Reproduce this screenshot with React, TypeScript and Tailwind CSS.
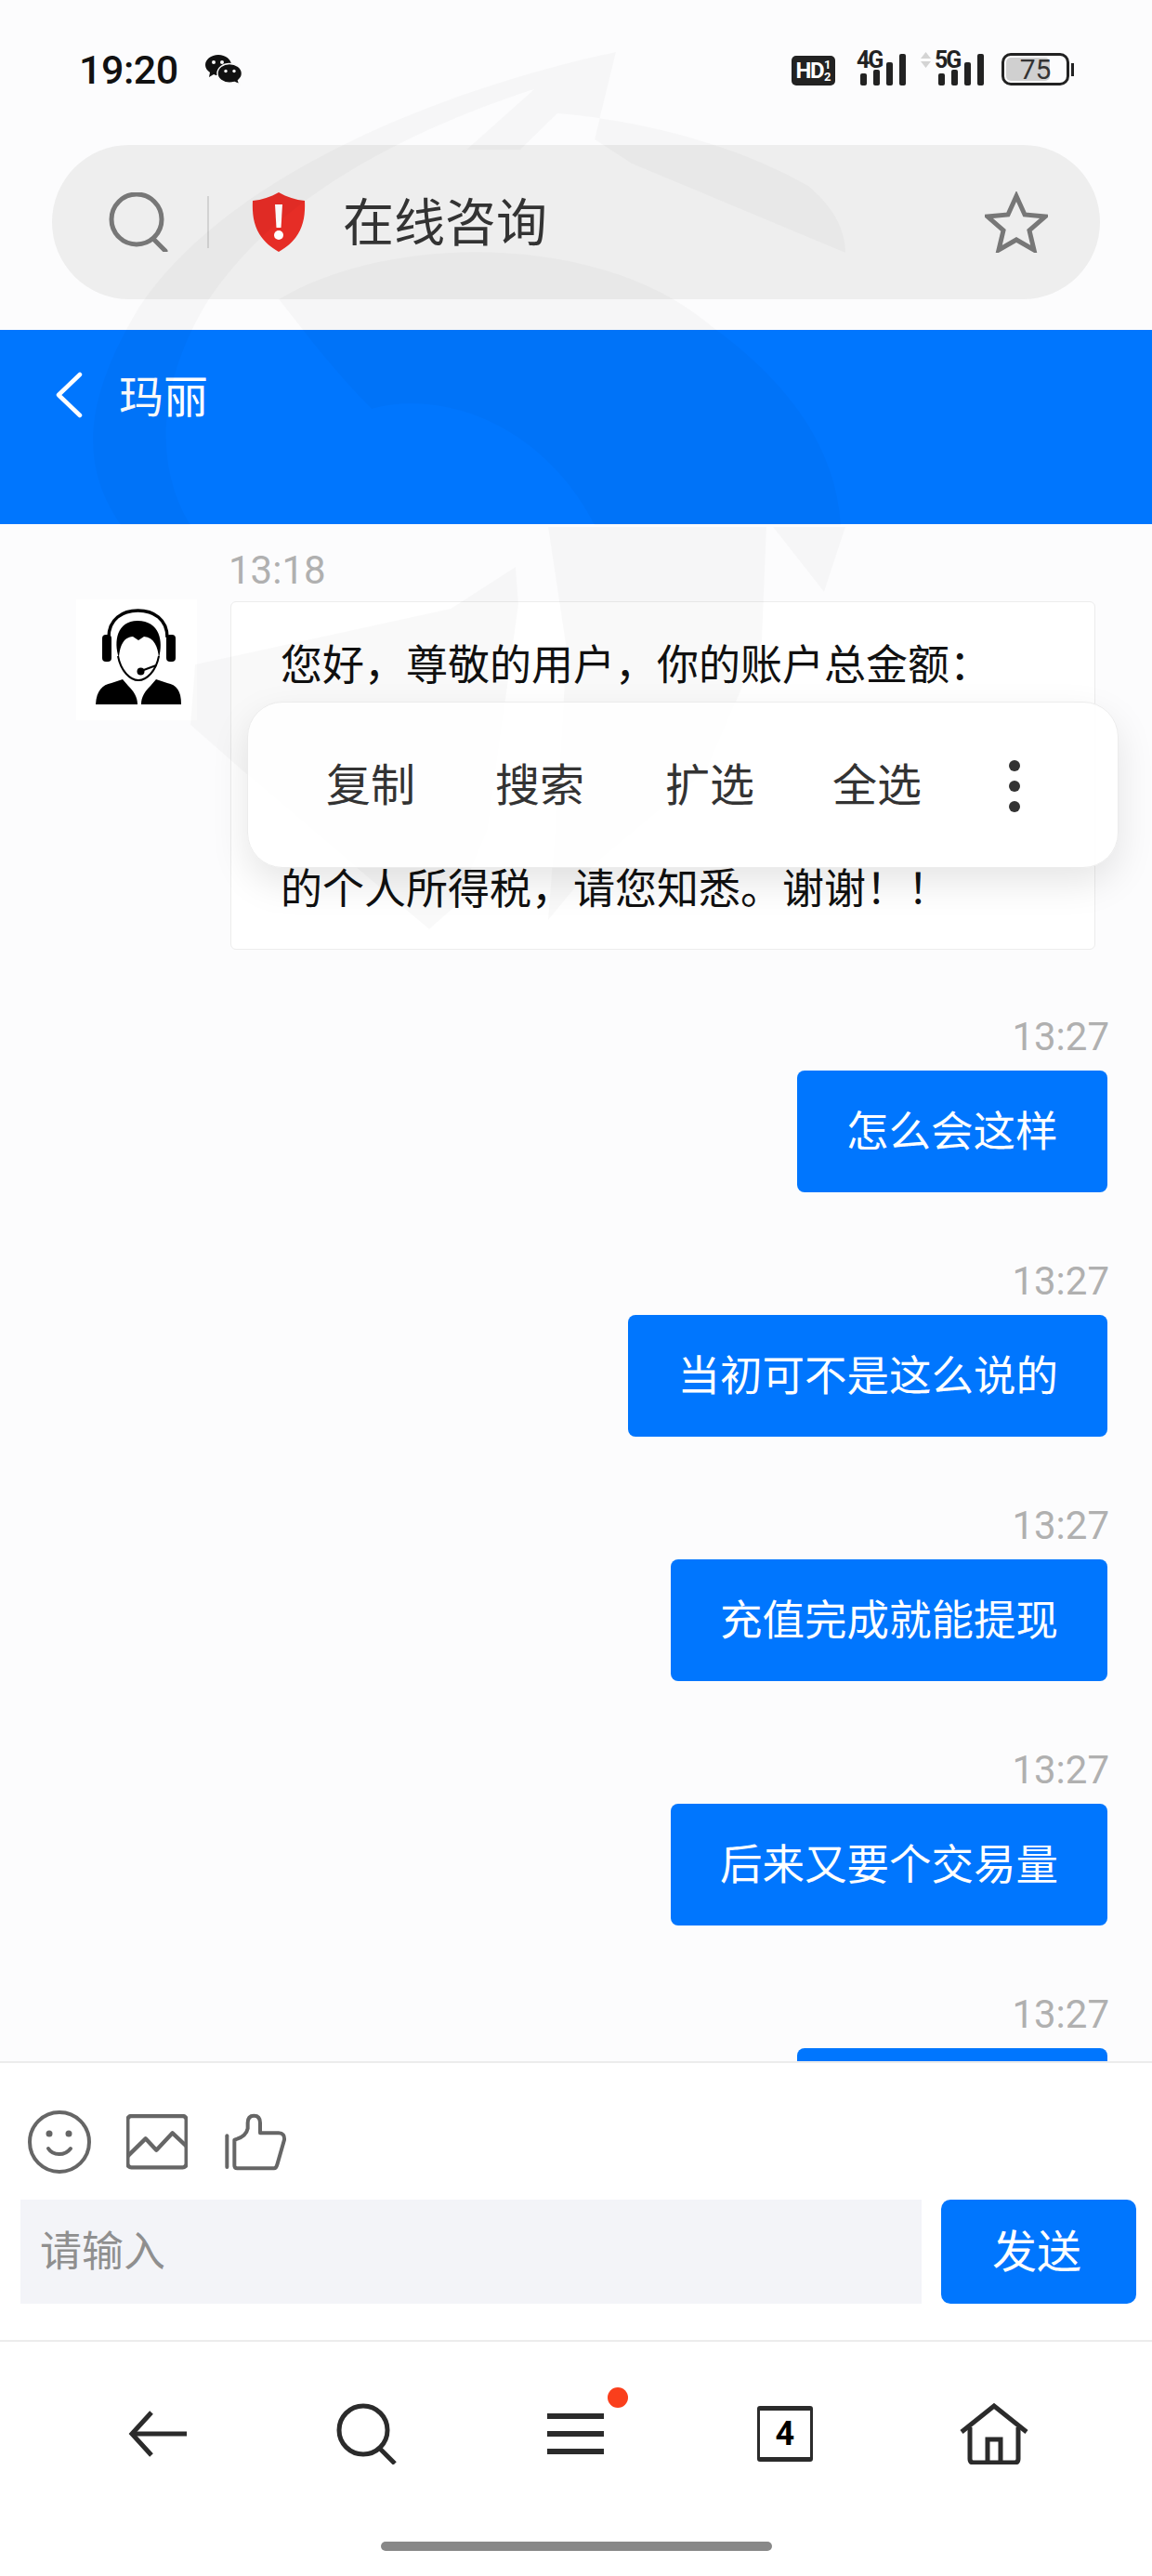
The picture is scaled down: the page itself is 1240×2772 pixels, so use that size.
import React from 'react';

const BLUE = 'bg-[#0076fe]';

const Signal: React.FC<{ label: string; arrows?: boolean }> = ({ label, arrows }) => (
    <div className="relative w-[49px] h-[36px] flex items-end gap-[7px]">
        <div className="absolute left-[-4px] top-[-4px] text-[25px] leading-[25px] font-bold tracking-[-2px] text-[#222]">{label}</div>
        {arrows && (
            <svg className="absolute left-[-19px] top-[0px]" width="11" height="17" viewBox="0 0 11 17">
                <path d="M5.5 0 L11 7 H0 Z M0 10 H11 L5.5 17 Z" fill="#d4d4d4" />
            </svg>
        )}
        <div className="w-[7px] h-[13px] rounded-[2px] bg-[#222]" />
        <div className="w-[7px] h-[17px] rounded-[2px] bg-[#222]" />
        <div className="w-[7px] h-[25px] rounded-[2px] bg-[#222]" />
        <div className="w-[7px] h-[34px] rounded-[2px] bg-[#222]" />
    </div>
);

const StatusBar: React.FC = () => (
    <div className="h-[156px] flex justify-between items-start pl-[85px] pr-[84px] pt-[55px]">
        <div className="flex items-center gap-[29px] mt-[3px]">
            <span className="text-[43px] leading-[34px] font-medium text-[#111] tracking-[-0.5px]">19:20</span>
            <svg width="40" height="33" viewBox="0 0 40 33">
                <path d="M14 0 C22 0 28 5 28 11 C28 17 22 22 14 22 C12 22 11 22 9 21 L4 24 L5 19 C2 17 0 14 0 11 C0 5 6 0 14 0 Z" fill="#111" />
                <path d="M26 9.5 C33 9.5 39.5 14 39.5 20 C39.5 23 38 25.5 35.5 27.5 L37 32 L31.5 29.5 C29.5 30 28 30.3 26 30.3 C19 30.3 13 26 13 20 C13 14 19 9.5 26 9.5 Z" fill="#111" stroke="#fafafa" strokeWidth="1.5" />
                <circle cx="9" cy="8" r="2" fill="#fafafa" />
                <circle cx="18" cy="8" r="2" fill="#fafafa" />
                <circle cx="22" cy="17.5" r="1.7" fill="#fafafa" />
                <circle cx="31" cy="17.5" r="1.7" fill="#fafafa" />
            </svg>
        </div>
        <div className="flex items-center">
            <div className="w-[47px] h-[32px] mt-[5px] rounded-[5px] bg-[#222] flex items-center justify-center text-white font-bold">
                <span className="text-[24px] leading-none tracking-[-1.5px]">HD</span>
                <span className="flex flex-col ml-[1px] text-[13px] leading-[13px] text-center">
                    <span>1</span>
                    <span>2</span>
                </span>
            </div>
            <div className="ml-[27px]"><Signal label="4G" /></div>
            <div className="ml-[35px]"><Signal label="5G" arrows /></div>
            <div className="ml-[19px] mt-[2px] relative w-[73px] h-[35px] border-[3px] border-[#222] rounded-[10px] flex items-center justify-center">
                <div className="absolute left-[2px] top-[2px] bottom-[2px] w-[47px] rounded-[5px] bg-[#d0d0d0]" />
                <span className="relative text-[30px] leading-none text-[#333]">75</span>
            </div>
            <div className="w-[3px] h-[14px] ml-[2px] mt-[2px] bg-[#222]" />
        </div>
    </div>
);

const SearchPill: React.FC = () => (
    <div className="mx-[56px] h-[166px] rounded-full bg-[#eeeeee] flex items-center pl-[61px] pr-[56px]">
        <svg width="64" height="64" viewBox="0 0 64 64" fill="none" stroke="#777" strokeWidth="5">
            <circle cx="30" cy="29" r="27" />
            <path d="M48 50 L61 63" strokeLinecap="round" />
        </svg>
        <div className="w-[2px] h-[56px] ml-[42px] bg-[#d2d2d2]" />
        <svg className="ml-[46px]" width="58" height="64" viewBox="0 0 58 64">
            <path d="M29 0 C38 5 47 8 57 9 C58 30 54 50 29 64 C4 50 0 30 1 9 C11 8 20 5 29 0 Z" fill="#e62d26" />
            <path d="M25 13 H33 L31.5 38 H26.5 Z" fill="#fff" />
            <circle cx="29" cy="46" r="5" fill="#fff" />
        </svg>
        <span className="ml-[40px] mt-[3px] text-[55px] leading-none text-[#333]">在线咨询</span>
        <svg className="ml-auto" width="68" height="66" viewBox="0 0 68 66" fill="none" stroke="#777" strokeWidth="5" strokeLinejoin="miter">
            <path d="M34 5 L43 25 L65 27 L48 42 L53 63 L34 52 L15 63 L20 42 L3 27 L25 25 Z" />
        </svg>
    </div>
);

const Header: React.FC = () => (
    <div className={`mt-[33px] h-[209px] ${BLUE} flex items-start pt-[45px] pl-[59px]`}>
        <svg width="30" height="50" viewBox="0 0 30 50" fill="none" stroke="#fff" strokeWidth="4.5" strokeLinecap="round" strokeLinejoin="round">
            <path d="M27 3 L4 25 L27 47" />
        </svg>
        <span className="ml-[39px] mt-[4px] text-[48px] leading-[48px] text-white">玛丽</span>
    </div>
);

const TimeLabel: React.FC<{ text: string; className?: string }> = ({ text, className }) => (
    <div className={`text-[42px] leading-[50px] text-[#b0b0b0] ${className ?? ''}`}>{text}</div>
);

const SelectionMenu: React.FC = () => (
    <div className="absolute left-[17px] top-[107px] w-[938px] h-[179px] z-20 rounded-[38px] bg-white/90 border border-[#ececec] shadow-[0_16px_40px_rgba(0,0,0,0.10)] flex items-center pl-[84px] pt-[2px] text-[48px] leading-none text-[#333]">
        <span className="w-[182px]">复制</span>
        <span className="w-[183px]">搜索</span>
        <span className="w-[180px]">扩选</span>
        <span className="w-[190px]">全选</span>
        <div className="flex flex-col gap-[10px]">
            <div className="w-[12px] h-[12px] rounded-full bg-[#333]" />
            <div className="w-[12px] h-[12px] rounded-full bg-[#333]" />
            <div className="w-[12px] h-[12px] rounded-full bg-[#333]" />
        </div>
    </div>
);

const AgentAvatar: React.FC = () => (
    <div className="w-[130px] h-[130px] mt-[-2px] bg-white shrink-0">
        <svg width="130" height="130" viewBox="22 15 130 130">
            <path d="M57 56 C57 36 72 27 88.5 27 C105 27 120 36 120 56" fill="none" stroke="#000" strokeWidth="3.5" />
            <rect x="50" y="53" width="10" height="29" rx="4" fill="#000" />
            <rect x="119" y="53" width="10" height="29" rx="4" fill="#000" />
            <path d="M68 78 C62 60 66 38 88 38 C112 38 116 60 111 78 C110 66 106 56 95 55 L89 59 L83 55 C72 56 69 66 68 78 Z" fill="#000" />
            <path d="M67 76 C70 92 80 102 89 102 C98 102 108 92 111 76" fill="none" stroke="#000" strokeWidth="2" />
            <circle cx="91.5" cy="92.5" r="4" fill="#000" />
            <path d="M92 92 L108 86" stroke="#000" strokeWidth="2" />
            <path d="M43 128 C44 113 50 107 60 105 L72 101 L78 108 C84 114 88 120 88 128 Z" fill="#000" />
            <path d="M92 128 C92 120 96 114 102 108 L108 101 L120 105 C130 107 135 113 135 128 Z" fill="#000" />
        </svg>
    </div>
);

const IncomingMessage: React.FC = () => (
    <div className="pl-[82px] pt-[25px]">
        <TimeLabel text="13:18" className="ml-[164px]" />
        <div className="flex items-start gap-[36px] mt-[8px]">
            <AgentAvatar />
            <div className="relative w-[931px] h-[375px] rounded-[6px] bg-white border border-[#ececec] pl-[53px] pt-[39px] text-[45px] leading-[60.5px] text-[#111]">
                <div>{'您好\uFF0C尊敬的用户\uFF0C你的账户总金额\uFF1A'}</div>
                <div className="h-[180.5px]" />
                <div>{'的个人所得税\uFF0C请您知悉\u3002谢谢\uFF01\uFF01'}</div>
                <SelectionMenu />
            </div>
        </div>
    </div>
);

const OutgoingMessage: React.FC<{ text: string }> = ({ text }) => (
    <div className="flex flex-col items-end pr-[48px] mb-[71px]">
        <TimeLabel text="13:27" className="mr-[-2px]" />
        <div className={`mt-[11px] h-[131px] min-w-[334px] px-[53px] pt-[2px] flex items-center rounded-[8px] ${BLUE} text-[45.5px] leading-none text-white`}>
            {text}
        </div>
    </div>
);

const Composer: React.FC = () => (
    <div className="h-[302px] bg-white border-t-2 border-b-2 border-[#ececec] pl-[22px] pr-[17px] pt-[51px]">
        <div className="flex items-center pl-[8px] h-[68px]">
            <svg width="68" height="68" viewBox="0 0 68 68" fill="none" stroke="#666" strokeWidth="4">
                <circle cx="34" cy="34" r="32" />
                <circle cx="23" cy="25" r="3.5" fill="#666" stroke="none" />
                <circle cx="44" cy="25" r="3.5" fill="#666" stroke="none" />
                <path d="M22 41 C27 49 40 49 46 41" strokeLinecap="round" />
            </svg>
            <svg className="ml-[38px]" width="66" height="60" viewBox="348 44 198 180" fill="none" stroke="#666" strokeWidth="13" strokeLinejoin="round">
                <rect x="352" y="50" width="190" height="166" rx="12" />
                <path d="M352 180 L410 123 L445 160 L497 105 L545 150" />
            </svg>
            <svg className="ml-[38px]" width="70" height="68" viewBox="660 30 210 204" fill="none" stroke="#666" strokeWidth="12" strokeLinejoin="round" strokeLinecap="round">
                <path d="M673 112 V213" />
                <path d="M697 125 V208 Q697 217 706 217 H825 Q832 217 835 205 L858 125 Q860 103 840 103 H780 V70 Q780 47 760 47 Q740 47 740 70 V88 Q735 115 697 125 Z" />
            </svg>
        </div>
        <div className="flex gap-[21px] mt-[28px]">
            <div className="w-[970px] h-[112px] bg-[#f3f4f8] flex items-center pl-[21px] pt-[1px] text-[45px] leading-none text-[#8f8f8f]">请输入</div>
            <div className={`w-[210px] h-[112px] rounded-[10px] ${BLUE} flex items-center justify-center pt-[2px] pr-[4px] text-[48px] leading-none text-white`}>发送</div>
        </div>
    </div>
);

const BottomNav: React.FC = () => (
    <div className="flex-1 bg-white">
        <div className="grid grid-cols-5 px-[58px] pt-[66px]">
            <div className="flex justify-center h-[66px] items-center">
                <svg width="64" height="50" viewBox="0 0 64 50" fill="none" stroke="#2b2b2b" strokeWidth="5">
                    <path d="M25 2 L4 25 L25 48" />
                    <path d="M4 25 H63" />
                </svg>
            </div>
            <div className="flex justify-center h-[66px] items-center">
                <svg width="66" height="66" viewBox="0 0 66 66" fill="none" stroke="#2b2b2b" strokeWidth="5">
                    <circle cx="29" cy="29" r="26" />
                    <path d="M47 49 L63 65" />
                </svg>
            </div>
            <div className="relative flex flex-col items-center justify-center gap-[13px] h-[66px]">
                <div className="w-[61px] h-[6px] bg-[#2b2b2b]" />
                <div className="w-[61px] h-[6px] bg-[#2b2b2b]" />
                <div className="w-[61px] h-[6px] bg-[#2b2b2b]" />
                <div className="absolute left-[146px] top-[-17px] w-[22px] h-[22px] rounded-full bg-[#fa3f1c]" />
            </div>
            <div className="flex justify-center h-[66px] items-center">
                <div className="w-[60px] h-[60px] border-[3px] border-t-[5px] border-b-[5px] border-[#2b2b2b] rounded-[3px] flex items-center justify-center text-[36px] leading-none font-bold text-black">4</div>
            </div>
            <div className="flex justify-center h-[66px] items-center">
                <svg width="74" height="66" viewBox="0 0 74 66" fill="none" stroke="#2b2b2b" strokeWidth="5">
                    <path d="M2 31 L37 3 L72 31" />
                    <path d="M11 26 V60 Q11 64 15 64 H59 Q63 64 63 60 V26" />
                    <path d="M30 63 V39 H44 V63" />
                </svg>
            </div>
        </div>
        <div className="w-[421px] h-[10px] mx-auto mt-[83px] rounded-full bg-[#888888]" />
    </div>
);

// faint logo that the page prints across itself
const Watermark: React.FC = () => (
    <svg className="absolute left-0 top-0 z-10 pointer-events-none" width="1240" height="1100" viewBox="0 0 1240 1100" fill="#000" fillOpacity="0.022">
        <path d="M663 56 C500 90 250 180 150 330 C90 430 85 500 130 565 L205 565 C165 500 170 410 225 322 C300 210 440 140 575 96 L502 161 L560 161 L600 122 C700 130 800 160 870 200 C900 225 910 250 910 272 L680 176 L640 150 Z" />
        <path d="M300 322 C420 250 650 250 766 351 C860 420 900 490 905 565 L640 565 C580 450 470 420 400 440 C360 400 330 360 300 322 Z" />
        <path d="M555 610 L485 655 L210 715 L205 780 L262 830 L462 1000 L490 975 L525 893 L558 650 Z" />
        <path d="M590 567 H825 L820 690 L760 830 L640 930 L590 990 L600 860 L610 700 Z" />
        <path d="M832 567 H910 L887 637 Z" />
    </svg>
);

export default function App() {
    return (
        <div className="relative w-[1240px] h-[2772px] overflow-hidden flex flex-col bg-[#fcfcfd] font-['Roboto','Noto_Sans_CJK_SC',sans-serif]">
            <StatusBar />
            <SearchPill />
            <Header />
            <div className="h-[1654px] overflow-hidden">
                <IncomingMessage />
                <div className="mt-[69px]">
                    <OutgoingMessage text="怎么会这样" />
                    <OutgoingMessage text="当初可不是这么说的" />
                    <OutgoingMessage text="充值完成就能提现" />
                    <OutgoingMessage text="后来又要个交易量" />
                    <OutgoingMessage text="" />
                </div>
            </div>
            <Composer />
            <BottomNav />
            <Watermark />
        </div>
    );
}
